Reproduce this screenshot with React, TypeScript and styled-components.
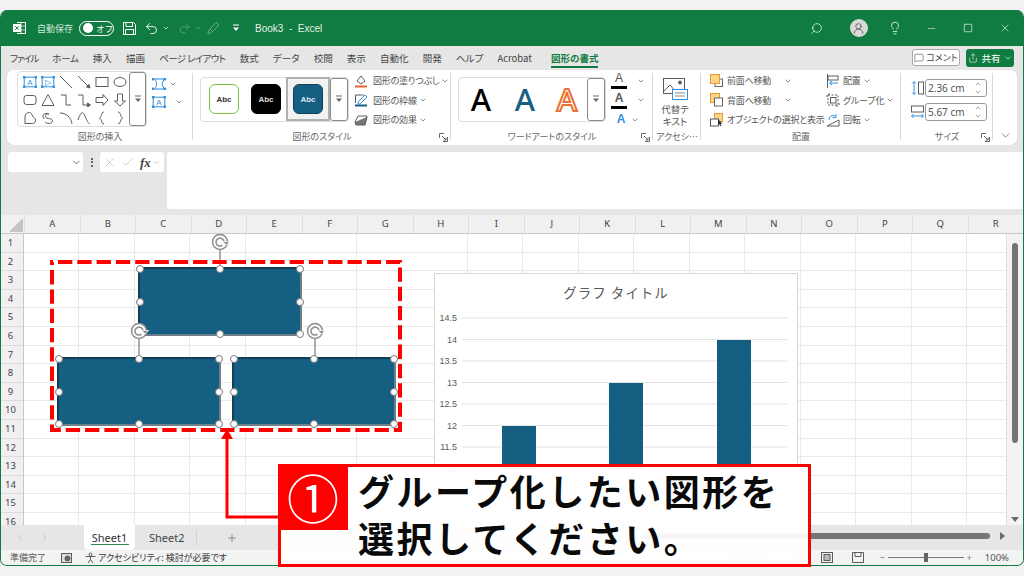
import React from 'react'
import styled, { createGlobalStyle } from 'styled-components'
import { ChevronDown, ChevronUp, ChevronLeft, ChevronRight, Search, Lightbulb, Minus, Square, X, Undo2, Redo2, Plus, Check, MessageSquare, Share, UserRound } from 'lucide-react'

const GREEN = '#107c41'
const INK = '#505050'
const BLUE = '#2f8fe0'
const FONT = '"Noto Sans CJK JP", "Noto Sans", "Liberation Sans", sans-serif'

const Global = createGlobalStyle`
  html, body { margin: 0; padding: 0; background: #f3f3f3; }
  * { box-sizing: border-box; }
  body { font-family: ${FONT}; color: ${INK}; }
`

const Small = ({ w = 14, h = 14, children }: { w?: number; h?: number; children: React.ReactNode }) => (
  <svg width={w} height={h} viewBox={`0 0 ${w} ${h}`} fill="none" stroke="#5c5c5c" strokeWidth="1" style={{ flex: 'none', display: 'block' }}>
    {children}
  </svg>
)

const Handles = () => (
  <g fill={BLUE} stroke="none">
    <rect x="0" y="1" width="2.4" height="2.4" />
    <rect x="11.6" y="1" width="2.4" height="2.4" />
    <rect x="0" y="10.6" width="2.4" height="2.4" />
    <rect x="11.6" y="10.6" width="2.4" height="2.4" />
  </g>
)

const TextBoxIcon = ({ glyph = 'A' }: { glyph?: string }) => (
  <Small>
    <rect x="1.2" y="2.2" width="11.6" height="9.6" stroke={BLUE} />
    <Handles />
    <text x="7" y="10.4" textAnchor="middle" fontSize="8" fontFamily="Liberation Sans" fill={BLUE} stroke="none">{glyph}</text>
  </Small>
)

const shapes: React.ReactNode[] = [
  <TextBoxIcon key="tb" />,
  <TextBoxIcon key="tv" glyph="▷" />,
  <Small key="l"><path d="M1 1l12 12" /></Small>,
  <Small key="la"><path d="M1 1l11 11" /><path d="M13 13l-3.6-1 2.6-2.6z" fill="#5c5c5c" /></Small>,
  <Small key="r"><rect x="1" y="2.5" width="12" height="9" /></Small>,
  <Small key="e"><ellipse cx="7" cy="7" rx="6" ry="4.5" /></Small>,
  <Small key="rr"><rect x="1" y="2.5" width="12" height="9" rx="2.5" /></Small>,
  <Small key="t"><path d="M7 1.5L13 12.5H1z" /></Small>,
  <Small key="el"><path d="M2 2h5v10h5" /></Small>,
  <Small key="ela"><path d="M1 2h5v10h5" /><path d="M13.5 12l-3 -2v4z" fill="#5c5c5c" /></Small>,
  <Small key="ra"><path d="M1 4.5h7V1.5L13 7l-5 5.5v-3H1z" /></Small>,
  <Small key="da"><path d="M4.5 1h5v7h3L7 13 1.5 8h3z" /></Small>,
  <Small key="ff"><path d="M2 12.500V6C2 3 4 1.500 6.500 1.500c2 0 2.500 2 3 3.500s3 1.500 3 4c0 2-1 3.500-3 3.500z" strokeLinejoin="round" /></Small>,
  <Small key="sc"><path d="M3 8c-3-4 1-7 5-5-4 0-5 3-2 4s7 1 5 4-6 1-7 0" /></Small>,
  <Small key="c"><path d="M1 2c6 0 11 4 12 11" /></Small>,
  <Small key="c2"><path d="M1 9c3-9 5-9 7-4s3 7 5 8" /></Small>,
  <Small key="lb"><path d="M9 1C6 1 7 6 4.5 7 7 8 6 13 9 13" /></Small>,
  <Small key="rb"><path d="M5 1c3 0 2 5 4.5 6C7 8 8 13 5 13" /></Small>,
]

const Dropdown = () => (
  <svg width="8" height="8" viewBox="0 0 8 8" fill="#666" style={{ display: 'block' }}>
    <path d="M1 1h6" stroke="#666" fill="none" />
    <path d="M1 3.5h6L4 7z" />
  </svg>
)

const Launcher = () => (
  <svg width="9" height="9" viewBox="0 0 9 9" fill="none" stroke="#6a6a6a" style={{ display: 'block' }}>
    <path d="M.5 5V.5H5M8.500 4v4.500H4M3 3l4 4M7 4.500V7H4.500" />
  </svg>
)

const Row = ({ children }: { children: React.ReactNode }) => <BtnRow>{children}</BtnRow>

// rotate handle: a ring with an inner spiral and a small arrow head, plus the stem down to the shape
const Rotator = ({ x, y, line }: { x: number; y: number; line: number }) => (
  <RotateWrap $x={x} $y={y}>
    <svg width="20" height={18 + line} viewBox={`0 0 20 ${18 + line}`} fill="none" stroke="#8c8c8c">
      <path d={`M9 17V${17 + line}`} strokeWidth="1.4" />
      <circle cx="9" cy="9" r="7.500" strokeWidth="1.5" fill="#fff" />
      <path d="M13 9a4 4 0 1 0-1.500 3.200" strokeWidth="1.5" />
      <path d="M18.800 8.500h-7l3.500 3.600z" fill="#8c8c8c" stroke="#fff" strokeWidth=".7" />
    </svg>
  </RotateWrap>
)

const handleSpots = [
  [0, 0], [50, 0], [100, 0],
  [0, 50], [100, 50],
  [0, 100], [50, 100], [100, 100],
]

const Drawn = ({ x, y }: { x: number; y: number }) => (
  <Shape $x={x} $y={y}>
    {handleSpots.map(([l, t]) => <Handle key={`${l}-${t}`} $l={l} $t={t} />)}
  </Shape>
)

const cols = 'ABCDEFGHIJKLMNOPQR'.split('')
const rows = Array.from({ length: 16 }, (_, i) => i + 1)
const tabs: [string, number][] = [['ファイル', -1.2], ['ホーム', -0.3], ['挿入', 0], ['描画', 0], ['ページ レイアウト', -0.6], ['数式', 0], ['データ', 0], ['校閲', 0], ['表示', 0], ['自動化', 0], ['開発', 0], ['ヘルプ', 0], ['Acrobat', 0]]

const ChartDrawing = () => {
  const ticks = ['14.5', '14', '13.5', '13', '12.5', '12', '11.5', '11']
  const bars = [[67, 152], [174, 109], [282, 66]]
  return (
    <svg width="364" height="219" viewBox="0 0 364 219" style={{ display: 'block' }}>
      <text x="181" y="24" textAnchor="middle" fontSize="13.5" fill="#595959" fontFamily={FONT} letterSpacing="1">グラフ タイトル</text>
      {ticks.map((t, i) => (
        <g key={t}>
          <line x1="27" x2="352" y1={44 + i * 21.5} y2={44 + i * 21.5} stroke="#e3e3e3" />
          <text x="22" y={47 + i * 21.5} textAnchor="end" fontSize="9" fill="#595959" fontFamily="Liberation Sans">{t}</text>
        </g>
      ))}
      {bars.map(([x, y]) => <rect key={x} x={x} y={y} width="34" height={195 - y} fill="#156082" />)}
    </svg>
  )
}

export default function App() {
  return (
    <Page>
      <Global />
      <Window>
        <TitleBar>
          <TitleSlot $ml={12}>
            <svg width="13" height="14" viewBox="0 0 13 14" fill="none" stroke="#fff">
              <path d="M4 1.500h8.500v11H4" />
              <path d="M8 1.500v11M4 5h8.500M4 9h8.500" strokeWidth=".7" />
              <rect x=".5" y="3.500" width="7" height="7" fill="#fff" />
              <path d="M2.300 5.200l3.200 3.600M5.500 5.200L2.300 8.800" stroke={GREEN} />
            </svg>
          </TitleSlot>
          <TitleLabel $ml={11}>自動保存</TitleLabel>
          <Toggle><Knob /><ToggleText>オフ</ToggleText></Toggle>
          <TitleSlot $ml={9}>
            <svg width="13" height="13" viewBox="0 0 13 13" fill="none" stroke="#fff">
              <path d="M.5.5h10l2 2v10H.5z" />
              <path d="M3 .5v4h6.500v-4M2.500 12.500V7.500h8v5" />
            </svg>
          </TitleSlot>
          <TitleSlot $ml={8}><Undo2 size={15} color="#fff" strokeWidth={1.4} /></TitleSlot>
          <TitleSlot $ml={3}><ChevronDown size={8} color="#fff" strokeWidth={2} /></TitleSlot>
          <TitleSlot $ml={8}><Redo2 size={13} color="#6fae8c" strokeWidth={1.3} /></TitleSlot>
          <TitleSlot $ml={3}><ChevronDown size={8} color="#6fae8c" strokeWidth={2} /></TitleSlot>
          <TitleSlot $ml={5}>
            <svg width="13" height="14" viewBox="0 0 13 14" fill="none" stroke="#6fae8c">
              <path d="M1 13c0-3 1-4 2-5l6-6.500 3 2.500-6.500 6.500c-1 1-3 2-4.500 2.500zM3 8l3 3" />
            </svg>
          </TitleSlot>
          <TitleSlot $ml={12}>
            <svg width="8" height="8" viewBox="0 0 8 8" fill="#fff"><path d="M1 1h6" stroke="#fff" /><path d="M1 3.500h6L4 7z" /></svg>
          </TitleSlot>
          <TitleText>Book3&nbsp; -&nbsp; Excel</TitleText>
          <TitleRight>
            <WinSlot $mr={6}><Search size={13} color="#fff" strokeWidth={1.3} style={{ transform: 'scaleX(-1)' }} /></WinSlot>
            <WinSlot><Avatar><UserRound size={13} color="#555" strokeWidth={1.5} /></Avatar></WinSlot>
            <WinSlot><Lightbulb size={14} color="#fff" strokeWidth={1.3} /></WinSlot>
            <WinSlot><Minus size={11} color="#fff" strokeWidth={1.2} /></WinSlot>
            <WinSlot><Square size={10} color="#fff" strokeWidth={1.5} /></WinSlot>
            <WinSlot><X size={12} color="#fff" strokeWidth={1.2} /></WinSlot>
          </TitleRight>
        </TitleBar>

        <TabStrip>
          {tabs.map(([t, s]) => <Tab key={t} $track={s}>{t}</Tab>)}
          <ActiveTab>図形の書式</ActiveTab>
          <TabRight>
            <CommentBtn><MessageSquare size={10} strokeWidth={1.3} color="#444" />コメント</CommentBtn>
            <ShareBtn><Share size={10} strokeWidth={1.4} color="#fff" />共有<ChevronDown size={8} color="#fff" strokeWidth={2} /></ShareBtn>
          </TabRight>
        </TabStrip>

        <RibbonWrap>
          <Ribbon>
            <Group $w={186}>
              <GroupBody $pl={10}>
                <ShapeGallery>
                  <ShapeGrid>{shapes.map((s, i) => <ShapeCell key={i}>{s}</ShapeCell>)}</ShapeGrid>
                  <ScrollBtn><Dropdown /></ScrollBtn>
                </ShapeGallery>
                <Stack $ml={5} $top>
                  <SideRow>
                    <Small><path d="M3 2h9l-2 5 2 5H3c2-4 2-6 0-10z" stroke={BLUE} /><Handles /></Small>
                    <ChevronDown size={8} strokeWidth={2} color="#555" />
                  </SideRow>
                  <SideRow>
                    <TextBoxIcon />
                    <ChevronDown size={8} strokeWidth={2} color="#555" style={{ marginLeft: 6 }} />
                  </SideRow>
                </Stack>
              </GroupBody>
              <GroupLabel>図形の挿入</GroupLabel>
            </Group>

            <Group $w={258}>
              <GroupBody $pl={7}>
                <StyleGallery $w={149}>
                  <Thumb $bg="#fff" $fg="#333" $line="#7ac143" $ml={8}>Abc</Thumb>
                  <Thumb $bg="#000" $fg="#ddd" $line="#000" $ml={12}>Abc</Thumb>
                  <SelectedFrame><Thumb $bg="#156082" $fg="#dce6ec" $line="#0f3f56">Abc</Thumb></SelectedFrame>
                  <ScrollBtn $ml="auto"><Dropdown /></ScrollBtn>
                </StyleGallery>
                <Stack $ml={5}>
                  <Row>
                    <Small>
                      <path d="M3 7l4-5 4 5-4 3z" />
                      <path d="M1 12.500h12" stroke="#e8622c" strokeWidth="2" />
                    </Small>
                    <BtnText $ml={3}>図形の塗りつぶし</BtnText>
                    <ChevronDown size={8} strokeWidth={2} color="#555" />
                  </Row>
                  <Row>
                    <Small>
                      <path d="M1.500 10V2h8" />
                      <path d="M4 9l7-7 2 2-7 7H4z" stroke={BLUE} />
                      <path d="M1 12.500h12" stroke="#156082" strokeWidth="2" />
                    </Small>
                    <BtnText $ml={3}>図形の枠線</BtnText>
                    <ChevronDown size={8} strokeWidth={2} color="#555" />
                  </Row>
                  <Row>
                    <Small>
                      <path d="M1 9l3-6h9l-2 7H2z" />
                      <path d="M1 9l1 3h9l2-8" fill="#777" />
                    </Small>
                    <BtnText $ml={3}>図形の効果</BtnText>
                    <ChevronDown size={8} strokeWidth={2} color="#555" />
                  </Row>
                </Stack>
              </GroupBody>
              <GroupFoot><GroupLabel>図形のスタイル</GroupLabel><LauncherSpot><Launcher /></LauncherSpot></GroupFoot>
            </Group>

            <Group $w={202}>
              <GroupBody $pl={7}>
                <StyleGallery $w={148}>
                  <WordA $ml={10}>A</WordA>
                  <WordA $ml={20} $color="#156082">A</WordA>
                  <WordA $ml={18} $color="#fff" $stroke="#e97132">A</WordA>
                  <ScrollBtn $ml="auto"><Dropdown /></ScrollBtn>
                </StyleGallery>
                <Stack $ml={5}>
                  <Row>
                    <TextA $bar="#000">A</TextA>
                    <ChevronDown size={8} strokeWidth={2} color="#555" style={{ marginLeft: 8 }} />
                  </Row>
                  <Row>
                    <TextA $bar="#000" $ghost>A</TextA>
                    <ChevronDown size={8} strokeWidth={2} color="#555" style={{ marginLeft: 8 }} />
                  </Row>
                  <Row>
                    <TextA $color={BLUE} $ghost>A</TextA>
                    <ChevronDown size={8} strokeWidth={2} color="#555" />
                  </Row>
                </Stack>
              </GroupBody>
              <GroupFoot><GroupLabel>ワードアートのスタイル</GroupLabel><LauncherSpot><Launcher /></LauncherSpot></GroupFoot>
            </Group>

            <Group $w={48}>
              <AltBody>
                <svg width="25" height="23" viewBox="0 0 25 23" fill="none" stroke="#5c5c5c" style={{ display: 'block' }}>
                  <rect x=".5" y=".5" width="21" height="15" />
                  <path d="M1 13l6-6 6 7" />
                  <circle cx="17" cy="4.500" r="1.500" fill="#5c5c5c" />
                  <rect x="9.500" y="11.500" width="15" height="10" fill="#fff" stroke={BLUE} />
                  <path d="M12 15h10M12 18h10" stroke="#888" />
                </svg>
                <AltText>代替テ<br />キスト</AltText>
              </AltBody>
              <GroupLabel>アクセシ…</GroupLabel>
            </Group>

            <Group $w={200}>
              <GroupBody $pl={9}>
                <Stack $w={116}>
                  <Row>
                    <Small w={13} h={14}>
                      <rect x="5" y="5" width="7.500" height="7.500" stroke="#666" />
                      <rect x=".5" y=".5" width="9" height="9" fill="#fbd58a" stroke="#e89b2a" />
                    </Small>
                    <BtnText $ml={2} $w={55}>前面へ移動</BtnText>
                    <ChevronDown size={8} strokeWidth={2} color="#555" />
                  </Row>
                  <Row>
                    <Small w={13} h={14}>
                      <rect x=".5" y=".5" width="9" height="9" fill="#fbd58a" stroke="#e89b2a" />
                      <rect x="4.500" y="5" width="8" height="8" fill="#fff" stroke="#666" />
                    </Small>
                    <BtnText $ml={2} $w={55}>背面へ移動</BtnText>
                    <ChevronDown size={8} strokeWidth={2} color="#555" />
                  </Row>
                  <Row>
                    <Small w={13} h={14}>
                      <rect x="4.500" y=".5" width="8" height="8" fill="#fbd58a" stroke="#e89b2a" />
                      <rect x=".5" y="6" width="8" height="7" fill="#fff" stroke="#555" />
                      <path d="M8 6l4.500 4.500-2 .3 1 2-1 .4-1-2-1.500 1.300z" fill="#333" stroke="none" />
                    </Small>
                    <BtnText $ml={2}>オブジェクトの選択と表示</BtnText>
                  </Row>
                </Stack>
                <Stack>
                  <Row>
                    <Small>
                      <path d="M1.500 0v14" />
                      <rect x="2" y="2" width="10" height="4" />
                      <path d="M12 9H4M6 7L3.500 9 6 11" stroke={BLUE} />
                    </Small>
                    <BtnText $ml={1}>配置</BtnText>
                    <ChevronDown size={8} strokeWidth={2} color="#555" />
                  </Row>
                  <Row>
                    <Small>
                      <rect x="2" y="2" width="10" height="10" strokeDasharray="2 1.500" />
                      <rect x="4.500" y="4.500" width="5.500" height="5.500" />
                      <path d="M0 3h2M12 11h2M3 0v2M11 12v2" />
                    </Small>
                    <BtnText $ml={1}>グループ化</BtnText>
                    <ChevronDown size={8} strokeWidth={2} color="#555" />
                  </Row>
                  <Row>
                    <Small>
                      <path d="M1 13h12V7z" />
                      <path d="M3 7a4 4 0 0 1 6-4" stroke={BLUE} />
                      <path d="M10 1v3.500H6.500" stroke={BLUE} />
                    </Small>
                    <BtnText $ml={1}>回転</BtnText>
                    <ChevronDown size={8} strokeWidth={2} color="#555" />
                  </Row>
                </Stack>
              </GroupBody>
              <GroupLabel>配置</GroupLabel>
            </Group>

            <Group $w={92}>
              <SizeBody>
                <SizeRow>
                  <Small w={13} h={14}>
                    <rect x="7.500" y="1" width="5" height="12" />
                    <path d="M3 1v12M1 2.500L3 .5l2 2M1 11.500l2 2 2-2" stroke={BLUE} />
                  </Small>
                  <Spin>2.36 cm<SpinArrows><ChevronUp size={8} strokeWidth={1.6} /><ChevronDown size={8} strokeWidth={1.6} /></SpinArrows></Spin>
                </SizeRow>
                <SizeRow>
                  <Small w={13} h={14}>
                    <rect x=".5" y="1" width="12" height="6" />
                    <path d="M1 11h11M2.500 9l-2 2 2 2M10.500 9l2 2-2 2" stroke={BLUE} />
                  </Small>
                  <Spin>5.67 cm<SpinArrows><ChevronUp size={8} strokeWidth={1.6} /><ChevronDown size={8} strokeWidth={1.6} /></SpinArrows></Spin>
                </SizeRow>
              </SizeBody>
              <GroupFoot><GroupLabel>サイズ</GroupLabel><LauncherSpot><Launcher /></LauncherSpot></GroupFoot>
            </Group>
            <Collapse><ChevronDown size={13} strokeWidth={1.3} color="#555" /></Collapse>
          </Ribbon>
        </RibbonWrap>

        <FormulaArea>
          <NameBox><ChevronDown size={11} strokeWidth={1.8} color="#555" /></NameBox>
          <Dots>
            <Dot /><Dot /><Dot />
          </Dots>
          <FxBox>
            <X size={13} strokeWidth={1} color="#aaa" />
            <Check size={13} strokeWidth={1} color="#aaa" />
            <Fx>fx</Fx>
            <ChevronDown size={9} strokeWidth={1.2} color="#999" />
          </FxBox>
          <FormulaInput />
        </FormulaArea>

        <ColHeaders>
          <Corner />
          {cols.map((c) => <ColHead key={c}>{c}</ColHead>)}
        </ColHeaders>

        <SheetArea>
          <RowHeaders>
            {rows.map((r) => <RowHead key={r}>{r}</RowHead>)}
          </RowHeaders>
          <Sheet>
            <Chart><ChartDrawing /></Chart>
            <Drawn x={114} y={33} />
            <Drawn x={33} y={123} />
            <Drawn x={208} y={123} />
            <Rotator x={187} y={-1} line={16} />
            <Rotator x={106} y={88} line={17} />
            <Rotator x={282} y={88} line={17} />
          </Sheet>
          <VScroll>
            <VThumb />
            <ArrowDown />
          </VScroll>
        </SheetArea>

        <SheetTabs>
          <NavArrows>
            <ChevronLeft size={11} strokeWidth={1.2} color="#aaa" />
            <ChevronRight size={11} strokeWidth={1.2} color="#aaa" />
          </NavArrows>
          <SheetTab>Sheet1</SheetTab>
          <PlainTab>Sheet2</PlainTab>
          <AddSheet><Plus size={12} strokeWidth={1.2} color="#555" /></AddSheet>
          <HScroll>
            <HThumb />
            <ArrowRight />
          </HScroll>
        </SheetTabs>

        <StatusBar>
          <StatusText>準備完了</StatusText>
          <StatusIcon $ml={15}>
            <Small w={11} h={11}><rect x=".5" y="1.500" width="10" height="9" fill="#ddd" /><circle cx="6.500" cy="6.500" r="2.500" fill="#666" /></Small>
          </StatusIcon>
          <StatusIcon $ml={13}>
            <Small w={11} h={12}><circle cx="5.500" cy="2.500" r="1.500" /><path d="M.5 4.500h10M5.500 5v2.500M3 11l2.500-3.500L8 11" /></Small>
          </StatusIcon>
          <StatusStrong>アクセシビリティ: 検討が必要です</StatusStrong>
          <StatusRight>
            <Faint>表示設定</Faint>
            <ViewIcons>
              <Small w={11} h={11}><path d="M.5.5h10v10H.5zM4 .5v10M7 .5v10M.5 4h10M.5 7h10" stroke="#aaa" /></Small>
              <Small w={12} h={11}><rect x=".5" y=".5" width="11" height="10" /><rect x="3" y="2.500" width="6" height="6" fill="#bbb" /></Small>
              <Small w={12} h={11}><path d="M.5.500h11v10H.5zM3 .5v4h6v-4" /></Small>
            </ViewIcons>
            <Zoom>
              <ZoomMark>−</ZoomMark>
              <ZoomTrack><ZoomThumb /></ZoomTrack>
              <ZoomMark>+</ZoomMark>
            </Zoom>
            <ZoomValue>100%</ZoomValue>
          </StatusRight>
        </StatusBar>
      </Window>

      <Marks width="1024" height="576" viewBox="0 0 1024 576" fill="none" stroke="#ff0000">
        <rect x="52" y="262" width="348" height="168" strokeWidth="4" strokeDasharray="14.300 5" strokeDashoffset="-6" />
        <path d="M279 517H227V436" strokeWidth="3" />
        <path d="M227 429l-6 10h12z" fill="#ff0000" stroke="none" />
      </Marks>

      <Callout>
        <StepBadge>①</StepBadge>
        <CalloutLine>グループ化したい図形を</CalloutLine>
        <CalloutLine>選択してください。</CalloutLine>
      </Callout>
    </Page>
  )
}

const Page = styled.div`
  position: relative;
  width: 1024px;
  height: 576px;
  padding-top: 10px;
  overflow: hidden;
  background: #f3f3f3;
`

const Window = styled.div`
  width: 1024px;
  height: 556px;
  display: flex;
  flex-direction: column;
  background: #e6e6e6;
  border: 1px solid ${GREEN};
  border-top: 0;
  border-radius: 7px;
  overflow: hidden;
`

const TitleBar = styled.div`
  height: 36px;
  flex: none;
  display: flex;
  align-items: center;
  background: ${GREEN};
  color: #fff;
`

const TitleSlot = styled.span<{ $ml: number }>`
  display: flex;
  margin-left: ${(p) => p.$ml}px;
`

const TitleLabel = styled.span<{ $ml: number }>`
  margin-left: ${(p) => p.$ml}px;
  font-size: 9px;
  color: #d5e8dc;
`

const Toggle = styled.div`
  position: relative;
  margin-left: 6px;
  width: 35px;
  height: 15px;
  border: 1px solid #fff;
  border-radius: 8px;
  display: flex;
  align-items: center;
  padding-left: 3px;
`

const Knob = styled.span`
  width: 10px;
  height: 10px;
  border-radius: 50%;
  background: #fff;
`

const ToggleText = styled.span`
  margin-left: 3px;
  font-size: 8.500px;
  line-height: 1;
  color: #fff;
`

const TitleText = styled.span`
  margin-left: 15px;
  font-size: 10px;
  font-family: "Liberation Sans", sans-serif;
  color: #e6f1ea;
  white-space: nowrap;
`

const TitleRight = styled.div`
  margin-left: auto;
  display: flex;
  align-items: center;
`

const WinSlot = styled.span<{ $mr?: number }>`
  width: 36.500px;
  margin-right: ${(p) => p.$mr ?? 0}px;
  display: flex;
  align-items: center;
  justify-content: center;
`

const Avatar = styled.span`
  width: 18px;
  height: 18px;
  border-radius: 50%;
  background: #d9d9d9;
  display: flex;
  align-items: center;
  justify-content: center;
`

const TabStrip = styled.div`
  height: 24px;
  flex: none;
  display: flex;
  align-items: center;
  padding-left: 9px;
  gap: 14.200px;
  background: #e6e6e6;
`

const Tab = styled.span<{ $track?: number }>`
  font-size: 9.500px;
  color: #444;
  white-space: nowrap;
  letter-spacing: ${(p) => p.$track ?? 0}px;
  font-feature-settings: "palt";
`

const ActiveTab = styled(Tab)`
  position: relative;
  margin-left: 5px;
  font-weight: 700;
  color: ${GREEN};
  &::after {
    content: '';
    position: absolute;
    left: 0;
    right: 0;
    bottom: -3px;
    height: 2px;
    background: ${GREEN};
  }
`

const TabRight = styled.div`
  margin-left: auto;
  display: flex;
  gap: 6px;
  padding-right: 9px;
`

const CommentBtn = styled.div`
  width: 48px;
  height: 17px;
  display: flex;
  align-items: center;
  justify-content: center;
  gap: 2px;
  background: #fff;
  border: 1px solid #a9a9a9;
  border-radius: 3px;
  font-size: 9px;
  color: #444;
  font-feature-settings: "palt";
`

const ShareBtn = styled.div`
  width: 48px;
  height: 18px;
  display: flex;
  align-items: center;
  justify-content: center;
  gap: 3px;
  background: ${GREEN};
  border-radius: 3px;
  font-size: 9.500px;
  color: #fff;
`

const RibbonWrap = styled.div`
  flex: none;
  padding: 0 6px;
`

const Ribbon = styled.div`
  height: 75px;
  display: flex;
  background: #fff;
  border-radius: 7px;
  box-shadow: 0 1px 1px rgba(0, 0, 0, 0.08);
`

const Group = styled.div<{ $w: number }>`
  width: ${(p) => p.$w}px;
  flex: none;
  position: relative;
  display: flex;
  flex-direction: column;
  &::after {
    content: '';
    position: absolute;
    right: 0;
    top: 3px;
    bottom: 5px;
    width: 1px;
    background: #d9d9d9;
  }
`

const GroupBody = styled.div<{ $pl: number }>`
  height: 60px;
  display: flex;
  align-items: center;
  padding-left: ${(p) => p.$pl}px;
`

const GroupLabel = styled.div`
  height: 15px;
  flex: 1;
  text-align: center;
  font-size: 9px;
  line-height: 14px;
  color: #666;
  white-space: nowrap;
  font-feature-settings: "palt";
`

const GroupFoot = styled.div`
  position: relative;
  flex: 1;
  display: flex;
`

const LauncherSpot = styled.span`
  position: absolute;
  right: 3px;
  bottom: 3px;
`

const ShapeGallery = styled.div`
  width: 130px;
  height: 56px;
  margin-top: -2px;
  display: flex;
  border: 1px solid #dcdcdc;
  border-radius: 4px;
`

const ShapeGrid = styled.div`
  display: grid;
  grid-template-columns: repeat(6, 18px);
  grid-auto-rows: 18px;
  padding: 1px 0 0 3px;
  width: 111px;
`

const ShapeCell = styled.div`
  display: flex;
  align-items: center;
  justify-content: center;
`

const ScrollBtn = styled.div<{ $ml?: string }>`
  width: 18px;
  margin-left: ${(p) => p.$ml ?? '0'};
  align-self: stretch;
  display: flex;
  align-items: center;
  justify-content: center;
  border: 1px solid #8a8a8a;
  border-radius: 3px;
  background: #fff;
`

const Stack = styled.div<{ $ml?: number; $w?: number; $top?: boolean }>`
  display: flex;
  flex-direction: column;
  margin-left: ${(p) => p.$ml ?? 0}px;
  width: ${(p) => (p.$w ? `${p.$w}px` : 'auto')};
  flex: none;
  align-self: ${(p) => (p.$top ? 'flex-start' : 'center')};
  padding-top: ${(p) => (p.$top ? 5 : 0)}px;
`

const SideRow = styled.div`
  height: 18px;
  display: flex;
  align-items: center;
  gap: 3px;
`

const BtnRow = styled.div`
  height: 19.500px;
  display: flex;
  align-items: center;
  gap: 2px;
  white-space: nowrap;
`

const BtnText = styled.span<{ $ml?: number; $w?: number }>`
  margin-left: ${(p) => p.$ml ?? 0}px;
  width: ${(p) => (p.$w ? `${p.$w}px` : 'auto')};
  font-size: 9px;
  letter-spacing: -0.2px;
  color: #555;
  font-feature-settings: "palt";
`

const StyleGallery = styled.div<{ $w: number }>`
  width: ${(p) => p.$w}px;
  height: 45px;
  margin-top: -2px;
  display: flex;
  align-items: center;
  border: 1px solid #dcdcdc;
  border-radius: 4px;
`

const Thumb = styled.div<{ $bg: string; $fg: string; $line: string; $ml?: number }>`
  width: 30px;
  height: 30px;
  flex: none;
  margin-left: ${(p) => p.$ml ?? 0}px;
  display: flex;
  align-items: center;
  justify-content: center;
  background: ${(p) => p.$bg};
  color: ${(p) => p.$fg};
  border: 1.500px solid ${(p) => p.$line};
  border-radius: 6px;
  font-size: 8px;
  font-weight: 700;
  font-family: "Liberation Sans", sans-serif;
`

const SelectedFrame = styled.div`
  width: 44px;
  height: 44px;
  margin-left: 5px;
  flex: none;
  display: flex;
  align-items: center;
  justify-content: center;
  background: #f2f2f2;
  border: 2px solid #b0b0b0;
`

const WordA = styled.span<{ $ml: number; $color?: string; $stroke?: string }>`
  margin-left: ${(p) => p.$ml}px;
  width: 24px;
  flex: none;
  text-align: center;
  font-family: "Noto Sans", "Liberation Sans", sans-serif;
  font-size: 31px;
  font-weight: 500;
  line-height: 1;
  color: ${(p) => p.$color ?? '#000'};
  -webkit-text-stroke: ${(p) => (p.$stroke ? `2px ${p.$stroke}` : '0')};
`

const TextA = styled.span<{ $bar?: string; $color?: string; $ghost?: boolean }>`
  position: relative;
  width: 16px;
  margin-left: ${(p) => (p.$bar ? 0 : 2)}px;
  padding-bottom: 1px;
  text-align: center;
  font-size: 12px;
  line-height: 13px;
  font-family: "Liberation Sans", sans-serif;
  font-weight: ${(p) => (p.$ghost ? 700 : 400)};
  color: ${(p) => p.$color ?? '#555'};
  border-bottom: ${(p) => (p.$bar ? `3px solid ${p.$bar}` : '0')};
`

const AltBody = styled.div`
  height: 60px;
  display: flex;
  flex-direction: column;
  align-items: center;
  padding: 8px 4px 0 0;
`

const AltText = styled.div`
  margin-top: 2px;
  text-align: center;
  font-size: 9.500px;
  line-height: 12px;
  color: #555;
  font-feature-settings: "palt";
`

const SizeBody = styled.div`
  height: 60px;
  display: flex;
  flex-direction: column;
  gap: 6px;
  padding: 9px 0 0 10px;
`

const SizeRow = styled.div`
  display: flex;
  align-items: center;
  gap: 1px;
`

const Spin = styled.div`
  width: 62px;
  height: 18px;
  display: flex;
  align-items: center;
  justify-content: space-between;
  padding: 0 2px 0 2px;
  border: 1px solid #9a9a9a;
  border-radius: 3px;
  font-size: 10px;
  font-family: "Noto Sans", sans-serif;
  color: #555;
`

const SpinArrows = styled.span`
  display: flex;
  flex-direction: column;
  margin-right: 2px;
`

const Collapse = styled.div`
  flex: 1;
  display: flex;
  justify-content: center;
  align-items: flex-end;
  padding-bottom: 3px;
`

const FormulaArea = styled.div`
  height: 70px;
  flex: none;
  display: flex;
  align-items: flex-start;
  padding: 7px 0 6px 7px;
  background: #e6e6e6;
`

const NameBox = styled.div`
  width: 75px;
  height: 20px;
  display: flex;
  align-items: center;
  justify-content: flex-end;
  padding-right: 1px;
  background: #fff;
  border-radius: 3px;
`

const Dots = styled.div`
  width: 17px;
  height: 20px;
  display: flex;
  flex-direction: column;
  align-items: center;
  justify-content: center;
  gap: 1.500px;
`

const Dot = styled.span`
  width: 2px;
  height: 2px;
  background: #666;
`

const FxBox = styled.div`
  width: 64px;
  height: 20px;
  display: flex;
  align-items: center;
  gap: 1px;
  padding-left: 3px;
  background: #fff;
  border-radius: 3px;
  svg:nth-child(2) { margin-left: 4px; }
`

const Fx = styled.span`
  margin-left: 5px;
  font-family: "Liberation Serif", serif;
  font-style: italic;
  font-weight: 700;
  font-size: 13px;
  line-height: 1;
  color: #444;
`

const FormulaInput = styled.div`
  flex: 1;
  height: 57px;
  margin-left: 3px;
  background: #fff;
  border-radius: 3px 0 0 3px;
`

const ColHeaders = styled.div`
  height: 19px;
  flex: none;
  display: flex;
  background: #f0f0f0;
  border-bottom: 1px solid #c8c8c8;
`

const Corner = styled.div`
  width: 23px;
  flex: none;
  position: relative;
  &::after {
    content: '';
    position: absolute;
    right: 1px;
    bottom: 1px;
    border-style: solid;
    border-width: 0 0 14px 14px;
    border-color: transparent transparent #c4c4c4 transparent;
  }
`

const ColHead = styled.div`
  width: 55.500px;
  flex: none;
  text-align: center;
  font-size: 9.500px;
  line-height: 18px;
  font-family: "Noto Sans", sans-serif;
  color: #444;
  border-left: 1px solid #dcdcdc;
`

const SheetArea = styled.div`
  flex: none;
  height: 291px;
  display: flex;
  overflow: hidden;
  background: #fff;
`

const RowHeaders = styled.div`
  width: 23px;
  flex: none;
  overflow: hidden;
  background: #f0f0f0;
  border-right: 1px solid #c8c8c8;
`

const RowHead = styled.div`
  height: 18.600px;
  padding-right: 3px;
  text-align: center;
  font-size: 9.500px;
  line-height: 18px;
  font-family: "Noto Sans", sans-serif;
  color: #444;
  border-bottom: 1px solid #dcdcdc;
`

const Sheet = styled.div`
  position: relative;
  flex: 1;
  overflow: hidden;
  background-color: #fff;
  background-image:
    repeating-linear-gradient(to right, transparent 0 54.500px, #eaeaea 54.500px 55.500px),
    repeating-linear-gradient(to bottom, transparent 0 17.600px, #eaeaea 17.600px 18.600px);
`

const Chart = styled.div`
  position: absolute;
  left: 410px;
  top: 39px;
  width: 364px;
  height: 219px;
  background: #fff;
  border: 1px solid #d9d9d9;
`

const Shape = styled.div<{ $x: number; $y: number }>`
  position: absolute;
  left: ${(p) => p.$x}px;
  top: ${(p) => p.$y}px;
  width: 164px;
  height: 69px;
  background: #156082;
  border: 2px solid #0f3f56;
  border-color: #123f55 #6f7f88 #6f7f88 #123f55;
`

const Handle = styled.span<{ $l: number; $t: number }>`
  position: absolute;
  left: ${(p) => p.$l}%;
  top: ${(p) => p.$t}%;
  width: 8px;
  height: 8px;
  margin: -4px 0 0 -4px;
  border-radius: 50%;
  background: #fff;
  border: 1.200px solid #7a7a7a;
`

const RotateWrap = styled.div<{ $x: number; $y: number }>`
  position: absolute;
  left: ${(p) => p.$x}px;
  top: ${(p) => p.$y}px;
  display: flex;
`

const VScroll = styled.div`
  position: relative;
  width: 17px;
  flex: none;
  background: #f3f3f3;
  border-left: 1px solid #e0e0e0;
`

const VThumb = styled.div`
  position: absolute;
  left: 5px;
  top: 9px;
  width: 6px;
  height: 200px;
  border-radius: 3px;
  background: #757575;
`

const ArrowDown = styled.span`
  position: absolute;
  left: 4px;
  bottom: 3px;
  border-style: solid;
  border-width: 5px 4px 0 4px;
  border-color: #6a6a6a transparent transparent transparent;
`

const SheetTabs = styled.div`
  height: 25px;
  flex: none;
  display: flex;
  align-items: center;
  background: #e6e6e6;
`

const NavArrows = styled.div`
  width: 83px;
  display: flex;
  gap: 13px;
  padding-left: 14px;
`

const SheetTab = styled.div`
  width: 51px;
  height: 25px;
  display: flex;
  align-items: center;
  justify-content: center;
  position: relative;
  background: #fff;
  border-radius: 0 0 4px 4px;
  font-family: "Noto Sans", sans-serif;
  font-size: 11px;
  color: #333;
  &::after {
    content: '';
    position: absolute;
    left: 7px;
    right: 6px;
    bottom: 5px;
    height: 1.500px;
    background: #2e8b57;
  }
`

const PlainTab = styled.div`
  margin-left: 14px;
  padding-right: 11px;
  border-right: 1px solid #d2d2d2;
  font-family: "Noto Sans", sans-serif;
  font-size: 11px;
  color: #444;
`

const AddSheet = styled.div`
  margin-left: 29px;
  display: flex;
`

const HScroll = styled.div`
  position: relative;
  flex: 1;
  align-self: stretch;
`

const HThumb = styled.div`
  position: absolute;
  right: 33px;
  top: 8px;
  width: 348px;
  height: 6px;
  border-radius: 3px;
  background: #757575;
`

const ArrowRight = styled.span`
  position: absolute;
  right: 18px;
  top: 7px;
  border-style: solid;
  border-width: 4px 0 4px 5px;
  border-color: transparent transparent transparent #6a6a6a;
`

const StatusBar = styled.div`
  height: 15px;
  flex: none;
  display: flex;
  align-items: center;
  padding-left: 9px;
  background: #f3f3f3;
  font-size: 9px;
  color: #555;
`

const StatusText = styled.span`
  font-feature-settings: "palt";
`

const StatusIcon = styled.span<{ $ml: number }>`
  margin-left: ${(p) => p.$ml}px;
`

const StatusStrong = styled.span`
  margin-left: 2px;
  color: #333;
  font-size: 9px;
  font-feature-settings: "palt";
`

const StatusRight = styled.div`
  margin-left: auto;
  display: flex;
  align-items: center;
`

const Faint = styled.span`
  color: #c8c8c8;
  margin-right: 24px;
`

const ViewIcons = styled.div`
  display: flex;
  gap: 19px;
`

const Zoom = styled.div`
  margin-left: 16px;
  display: flex;
  align-items: center;
  gap: 3px;
`

const ZoomMark = styled.span`
  font-size: 9px;
  color: #777;
`

const ZoomTrack = styled.div`
  position: relative;
  width: 76px;
  height: 1px;
  background: #777;
`

const ZoomThumb = styled.span`
  position: absolute;
  left: 36px;
  top: -4px;
  width: 4px;
  height: 9px;
  background: #666;
`

const ZoomValue = styled.span`
  margin: 0 14px 0 13px;
  font-family: "Noto Sans", sans-serif;
  font-size: 9.500px;
`

const Marks = styled.svg`
  position: absolute;
  left: 0;
  top: 0;
  pointer-events: none;
`

const Callout = styled.div`
  position: absolute;
  left: 278px;
  top: 464px;
  width: 533px;
  height: 103px;
  padding: 0 0 0 77px;
  background: rgba(255, 255, 255, 0.95);
  border: 3px solid #ff0000;
`

const StepBadge = styled.div`
  position: absolute;
  left: -3px;
  top: -3px;
  width: 70px;
  height: 66px;
  display: flex;
  align-items: center;
  justify-content: center;
  background: #ff0000;
  color: #fff;
  font-family: "Noto Sans CJK JP", sans-serif;
  font-size: 52px;
  line-height: 1;
`

const CalloutLine = styled.div`
  height: 47px;
  font-size: 36px;
  line-height: 47px;
  font-weight: 700;
  letter-spacing: 2.500px;
  color: #0a0a0a;
  white-space: nowrap;
`
